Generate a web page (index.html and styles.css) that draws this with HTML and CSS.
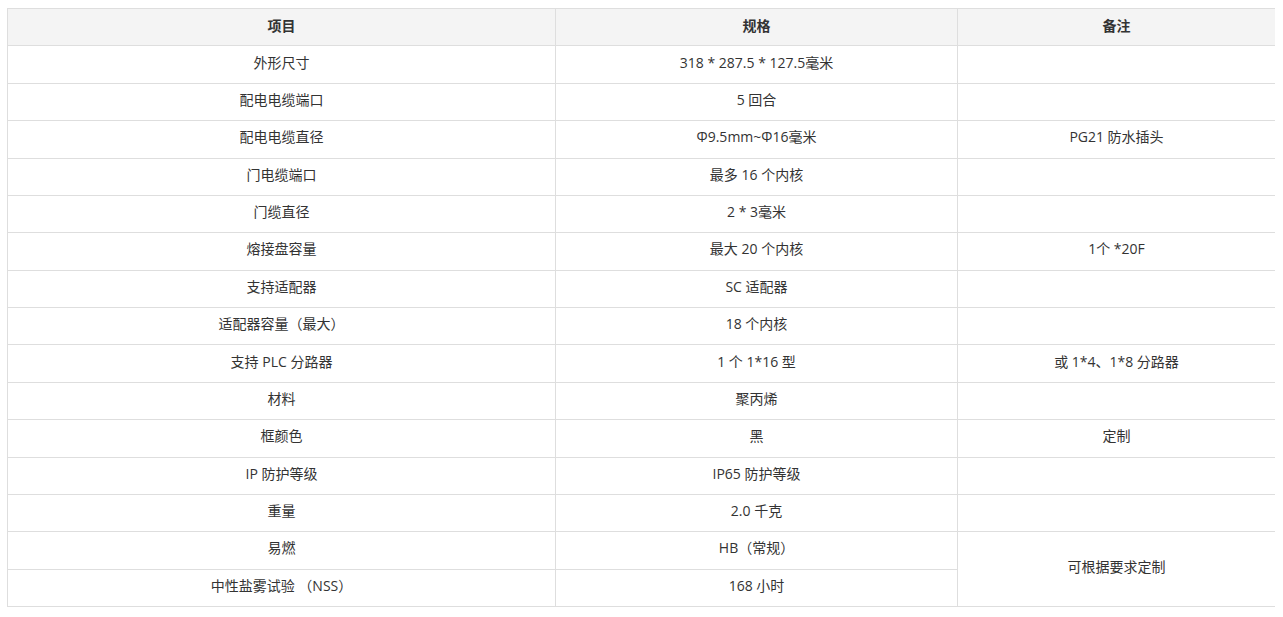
FILE: index.html
```html
<!DOCTYPE html>
<html lang="zh-CN">
<head>
<meta charset="utf-8">
<title>规格</title>
<link rel="stylesheet" href="styles.css">
</head>
<body>
<table class="spec">
  <colgroup>
    <col class="c1">
    <col class="c2">
    <col class="c3">
  </colgroup>
  <thead>
    <tr><th>项目</th><th>规格</th><th>备注</th></tr>
  </thead>
  <tbody>
    <tr><td>外形尺寸</td><td>318 * 287.5 * 127.5毫米</td><td></td></tr>
    <tr><td>配电电缆端口</td><td>5 回合</td><td></td></tr>
    <tr><td>配电电缆直径</td><td>Φ9.5mm~Φ16毫米</td><td>PG21 防水插头</td></tr>
    <tr><td>门电缆端口</td><td>最多 16 个内核</td><td></td></tr>
    <tr><td>门缆直径</td><td>2 * 3毫米</td><td></td></tr>
    <tr><td>熔接盘容量</td><td>最大 20 个内核</td><td>1个 *20F</td></tr>
    <tr><td>支持适配器</td><td>SC 适配器</td><td></td></tr>
    <tr><td>适配器容量（最大）</td><td>18 个内核</td><td></td></tr>
    <tr><td>支持 PLC 分路器</td><td>1 个 1*16 型</td><td>或 1*4、1*8 分路器</td></tr>
    <tr><td>材料</td><td>聚丙烯</td><td></td></tr>
    <tr><td>框颜色</td><td>黑</td><td>定制</td></tr>
    <tr><td>IP 防护等级</td><td>IP65 防护等级</td><td></td></tr>
    <tr><td>重量</td><td>2.0 千克</td><td></td></tr>
    <tr><td>易燃</td><td>HB（常规）</td><td rowspan="2">可根据要求定制</td></tr>
    <tr><td>中性盐雾试验 （NSS）</td><td>168 小时</td></tr>
  </tbody>
</table>
</body>
</html>
```
FILE: styles.css
```css
html, body {
  background: #fff;
}
body {
  margin: 8px 8px 8px 7px;
  font-family: "Open Sans", "Noto Sans CJK SC", sans-serif;
  font-size: 14px;
  color: #333;
}
.spec {
  width: 1268px;
  border-collapse: collapse;
  table-layout: fixed;
}
.spec .c1 { width: 548px; }
.spec .c2 { width: 402px; }
.spec .c3 { width: 318px; }
.spec th,
.spec td {
  border: 1px solid #dedede;
  text-align: center;
  vertical-align: middle;
  padding: 0 10px 4px;
  height: 37.375px;
  box-sizing: border-box;
  line-height: 20px;
}
.spec th {
  background: #f4f4f4;
  font-weight: 700;
  color: #333;
  padding-bottom: 2px;
}
```
